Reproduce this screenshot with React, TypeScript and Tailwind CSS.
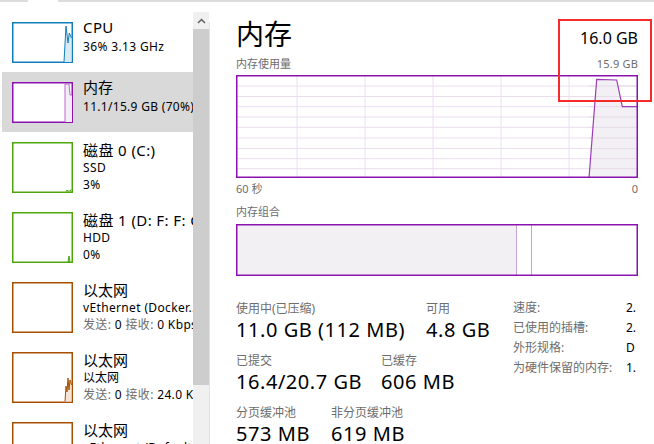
import React from "react";

const BLUE = "#117dbb";
const PURPLE = "#8b12ae";
const GREEN = "#4da60c";
const BROWN = "#a74f01";

function Thumb({ color, h, children }: { color: string; h: number; children?: React.ReactNode }) {
  return (
    <svg width={61} height={h} className="block shrink-0">
      <rect x={0.75} y={0.75} width={59.5} height={h - 1.5} fill="white" stroke={color} strokeWidth={1.5} />
      {children}
    </svg>
  );
}

function Gray({ children }: { children: React.ReactNode }) {
  return <span className="text-[#6d6d6d]">{children}</span>;
}

function Sidebar() {
  return (
    <div className="flex w-[210px] shrink-0">
      <div className="w-[193px] shrink-0 overflow-hidden pt-[10px] pl-[2px]">
        {/* CPU */}
        <div className="flex h-[60px] pl-[10px]">
          <div className="mt-[10px]">
            <Thumb color={BLUE} h={41}>
              <polygon points="52,40 54,4 56,21 57.3,11 59.5,16 59.5,40" fill="#d9eaf4" />
              <polyline points="52,40 54,4 56,21 57.3,11 59.5,16" fill="none" stroke={BLUE} strokeWidth={1} />
            </Thumb>
          </div>
          <div className="ml-[10px] mt-[6px] whitespace-nowrap">
            <div className="text-[15px] leading-[18px] tracking-[0.4px] text-black">CPU</div>
            <div className="mt-[2px] text-[12px] leading-[18px] tracking-[0.35px] text-black">36% 3.13 GHz</div>
          </div>
        </div>
        {/* Memory selected */}
        <div className="flex h-[60px] bg-[#d9d9d9] pl-[10px]">
          <div className="mt-[10px]">
            <Thumb color={PURPLE} h={41}>
              <polygon points="53,40 53,2 57,2 58,13 60,13 60,40" fill="#f3eef5" />
              <polyline points="53,40 53,2 57,2 58,13 60,13" fill="none" stroke="#b56acb" strokeWidth={1} />
            </Thumb>
          </div>
          <div className="ml-[10px] mt-[6px] whitespace-nowrap">
            <div className="text-[15px] leading-[18px] text-black">内存</div>
            <div className="mt-[2px] text-[12px] leading-[18px] tracking-[0.3px] text-black">11.1/15.9 GB (70%)</div>
          </div>
        </div>
        {/* Disk 0 */}
        <div className="flex h-[70px] pl-[10px]">
          <div className="mt-[10px]">
            <Thumb color={GREEN} h={51}>
              <polyline points="54,49.5 55,48 56,49.5 57,48.5 58,49.5 59,47.5" fill="none" stroke={GREEN} strokeWidth={1} />
            </Thumb>
          </div>
          <div className="ml-[10px] mt-[10px] whitespace-nowrap">
            <div className="text-[15px] leading-[17px] tracking-[0.4px] text-black">磁盘 0 (C:)</div>
            <div className="text-[12px] leading-[17px] tracking-[0.35px] text-black">SSD</div>
            <div className="text-[12px] leading-[17px] tracking-[0.35px] text-black">3%</div>
          </div>
        </div>
        {/* Disk 1 */}
        <div className="flex h-[70px] pl-[10px]">
          <div className="mt-[10px]">
            <Thumb color={GREEN} h={51}>
              <polygon points="56,49.5 57,44 58,49.5" fill="#cfe6bd" stroke={GREEN} strokeWidth={1} />
            </Thumb>
          </div>
          <div className="ml-[10px] mt-[10px] whitespace-nowrap">
            <div className="text-[15px] leading-[17px] tracking-[0.4px] text-black">磁盘 1 (D: F: F: G:)</div>
            <div className="text-[12px] leading-[17px] tracking-[0.35px] text-black">HDD</div>
            <div className="text-[12px] leading-[17px] tracking-[0.35px] text-black">0%</div>
          </div>
        </div>
        {/* Ethernet 1 */}
        <div className="flex h-[70px] pl-[10px]">
          <div className="mt-[10px]">
            <Thumb color={BROWN} h={51} />
          </div>
          <div className="ml-[10px] mt-[10px] whitespace-nowrap">
            <div className="text-[15px] leading-[17px] text-black">以太网</div>
            <div className="text-[12px] leading-[17px] tracking-[0.35px] text-black">vEthernet (Docker...</div>
            <div className="text-[12px] leading-[17px] tracking-[0.35px] text-black">
              <Gray>发送:</Gray> 0 <Gray>接收:</Gray> 0 Kbps
            </div>
          </div>
        </div>
        {/* Ethernet 2 */}
        <div className="flex h-[70px] pl-[10px]">
          <div className="mt-[10px]">
            <Thumb color={BROWN} h={51}>
              <polygon points="53,49.5 54,34 55,40 56,26 57,38 58,28 59.5,33 59.5,49.5" fill="#f3e4d6" />
              <polyline points="53,49.5 54,34 55,40 56,26 57,38 58,28 59.5,33" fill="none" stroke={BROWN} strokeWidth={1} />
            </Thumb>
          </div>
          <div className="ml-[10px] mt-[10px] whitespace-nowrap">
            <div className="text-[15px] leading-[17px] text-black">以太网</div>
            <div className="text-[12px] leading-[17px] text-black">以太网</div>
            <div className="text-[12px] leading-[17px] tracking-[0.35px] text-black">
              <Gray>发送:</Gray> 0 <Gray>接收:</Gray> 24.0 Kbps
            </div>
          </div>
        </div>
        {/* Ethernet 3 */}
        <div className="flex h-[70px] pl-[10px]">
          <div className="mt-[10px]">
            <Thumb color={BROWN} h={51} />
          </div>
          <div className="ml-[10px] mt-[10px] whitespace-nowrap">
            <div className="text-[15px] leading-[17px] text-black">以太网</div>
            <div className="text-[12px] leading-[17px] tracking-[0.35px] text-black">vEthernet (Default Switch)</div>
          </div>
        </div>
      </div>
      {/* scrollbar */}
      <div className="mt-[10px] flex w-[16px] shrink-0 flex-col bg-[#f0f0f0]">
        <div className="flex h-[17px] items-center justify-center">
          <svg width={9} height={6}>
            <polyline points="1,5 4.5,1.5 8,5" fill="none" stroke="#606060" strokeWidth={1.5} />
          </svg>
        </div>
        <div className="h-[356px] bg-[#cdcdcd]" />
      </div>
      <div className="mt-[20px] w-[1px] bg-[#e3e3e3]" />
    </div>
  );
}

function UsageGraph() {
  const W = 402;
  const H = 103;
  const vx = [61, 129, 197, 265, 333];
  const hy = [11, 21.5, 31.7, 42, 52.3, 63, 73.5, 83.7, 93.7];
  return (
    <svg width={W} height={H} className="block">
      <rect x={0} y={0} width={W} height={H} fill="white" />
      {vx.map((x) => (
        <line key={"v" + x} x1={x} y1={0} x2={x} y2={H} stroke="#ecdcf0" strokeWidth={1} />
      ))}
      {hy.map((y) => (
        <line key={"h" + y} x1={0} y1={y} x2={W} y2={y} stroke="#ecdcf0" strokeWidth={1} />
      ))}
      <polygon points="353,103 360.7,4.3 380.7,5 386.3,31.7 401,31.7 401,103" fill="#f1eef3" fillOpacity={0.9} />
      {hy.map((y) => (
        <line key={"h2" + y} x1={353} y1={y} x2={W} y2={y} stroke="#e6dbe9" strokeWidth={1} />
      ))}
      <polyline points="353,103 360.7,4.3 380.7,5 386.3,31.7 401,31.7" fill="none" stroke="#9d3bb8" strokeWidth={1.2} />
      <rect x={0.75} y={0.75} width={W - 1.5} height={H - 1.5} fill="none" stroke={PURPLE} strokeWidth={1.5} />
    </svg>
  );
}

function CompBar() {
  const W = 402;
  const H = 52;
  return (
    <svg width={W} height={H} className="block">
      <rect x={0} y={0} width={W} height={H} fill="white" />
      <rect x={0} y={0} width={280} height={H} fill="#f3f0f4" />
      <line x1={280.5} y1={0} x2={280.5} y2={H} stroke="#c9a3d6" strokeWidth={1} />
      <line x1={295.5} y1={0} x2={295.5} y2={H} stroke="#c9a3d6" strokeWidth={1} />
      <rect x={0.75} y={0.75} width={W - 1.5} height={H - 1.5} fill="none" stroke={PURPLE} strokeWidth={1.5} />
    </svg>
  );
}

function Stat({ label, value, w }: { label: string; value: string; w?: string }) {
  return (
    <div className={"shrink-0 whitespace-nowrap " + (w ?? "")}>
      <div className="text-[12px] leading-[16px] text-[#6d6d6d]">{label}</div>
      <div className="text-[20px] leading-[26px] tracking-[0.55px] text-black">{value}</div>
    </div>
  );
}

function Main() {
  return (
    <div className="relative flex-1 pl-[26px] pr-[16px]">
      <div className="flex items-start justify-between">
        <div className="mt-[14px] text-[28px] leading-[36px] text-black">内存</div>
        <div className="mt-[26px] text-[16px] leading-[20px] text-black">16.0 GB</div>
      </div>
      <div className="mt-[5px] flex justify-between text-[11px] leading-[14px] text-[#6d6d6d]">
        <span>内存使用量</span>
        <span className="tracking-[0.2px]">15.9 GB</span>
      </div>
      <div className="mt-[4px]">
        <UsageGraph />
      </div>
      <div className="mt-[4px] flex w-[402px] justify-between text-[11px] leading-[14px] text-[#6d6d6d]">
        <span>60 秒</span>
        <span>0</span>
      </div>
      <div className="mt-[9px] text-[11px] leading-[14px] text-[#6d6d6d]">内存组合</div>
      <div className="mt-[5px]">
        <CompBar />
      </div>
      <div className="flex">
        <div className="mt-[25px] w-[277px] shrink-0 overflow-hidden">
          <div className="flex">
            <Stat label="使用中(已压缩)" value="11.0 GB (112 MB)" w="w-[190px]" />
            <Stat label="可用" value="4.8 GB" />
          </div>
          <div className="mt-[10px] flex">
            <Stat label="已提交" value="16.4/20.7 GB" w="w-[145px]" />
            <Stat label="已缓存" value="606 MB" />
          </div>
          <div className="mt-[10px] flex">
            <Stat label="分页缓冲池" value="573 MB" w="w-[95px]" />
            <Stat label="非分页缓冲池" value="619 MB" />
          </div>
        </div>
        <div className="mt-[22px] w-[125px] shrink-0 overflow-hidden text-[12px] leading-[20px] whitespace-nowrap">
          {[
            ["速度:", "2."],
            ["已使用的插槽:", "2."],
            ["外形规格:", "D"],
            ["为硬件保留的内存:", "1."],
          ].map(([k, v]) => (
            <div key={k} className="flex">
              <div className="w-[113px] shrink-0 text-[#6d6d6d]">{k}</div>
              <div className="text-black">{v}</div>
            </div>
          ))}
        </div>
      </div>
    </div>
  );
}

export default function App() {
  return (
    <div className="relative h-[444px] w-[654px] overflow-hidden bg-white font-['Noto_Sans','Noto_Sans_CJK_SC',sans-serif]">
      <div className="flex h-[2px]">
        <div className="w-[28px] bg-[#dcdcdc]" />
        <div className="w-[30px]" />
        <div className="flex flex-1 bg-[#dcdcdc]" />
      </div>
      <div className="flex h-[442px]">
        <Sidebar />
        <Main />
      </div>
      <div className="absolute left-[558px] top-[19px] h-[83px] w-[94px] border-2 border-[#f52a2a]" />
    </div>
  );
}
